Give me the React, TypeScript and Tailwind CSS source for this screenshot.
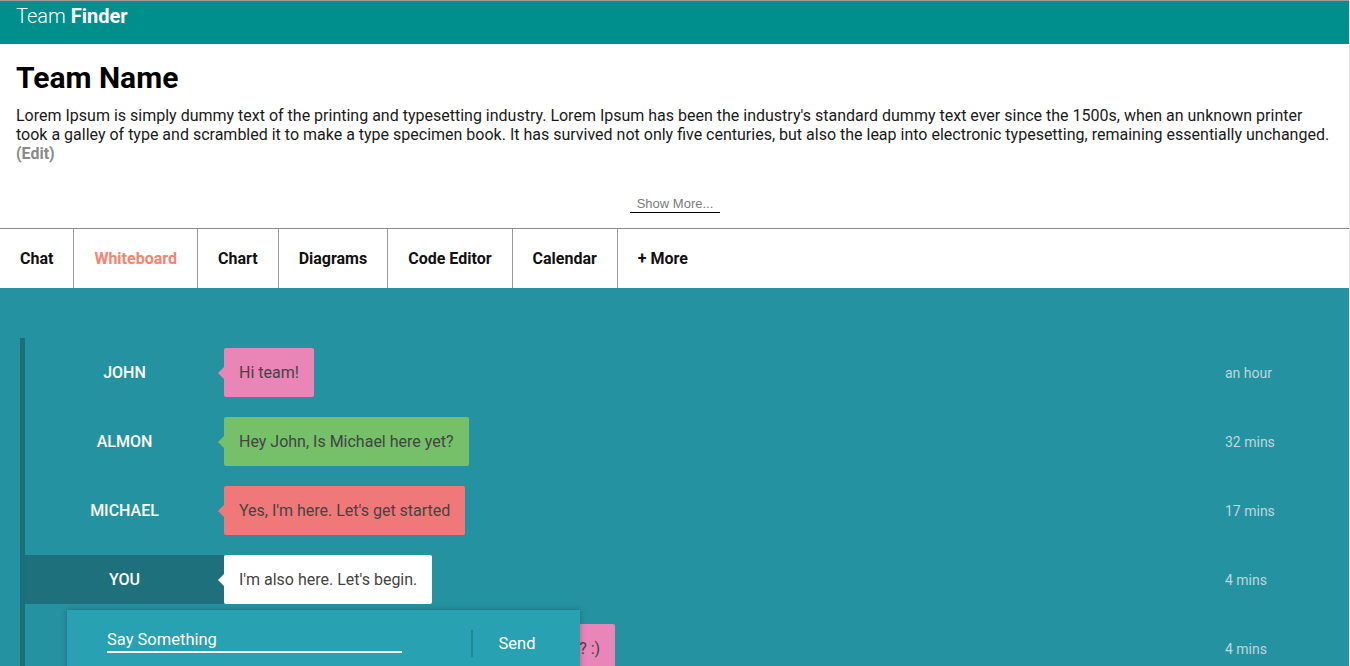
import React from "react";

const tabs = ["Chat", "Whiteboard", "Chart", "Diagrams", "Code Editor", "Calendar", "+ More"];

const messages = [
  { name: "JOHN", text: "Hi team!", color: "bg-[#e985b7]", arrow: "border-r-[#e985b7]", time: "an hour" },
  { name: "ALMON", text: "Hey John, Is Michael here yet?", color: "bg-[#75c069]", arrow: "border-r-[#75c069]", time: "32 mins" },
  { name: "MICHAEL", text: "Yes, I'm here. Let's get started", color: "bg-[#f17878]", arrow: "border-r-[#f17878]", time: "17 mins" },
  { name: "YOU", text: "I'm also here. Let's begin.", color: "bg-white", arrow: "border-r-white", time: "4 mins", me: true },
  { name: "JOHN", text: "Great, so shall we start with the whiteboard now? :)", color: "bg-[#e985b7]", arrow: "border-r-[#e985b7]", time: "4 mins" },
];

export default function App() {
  return (
    <div className="w-[1350px] h-[666px] overflow-hidden bg-white border-r border-[#e6e6e6] font-['Roboto',sans-serif]">
      <header className="h-[44px] border-t border-[#9a9a9a] bg-[#008f8c] px-4 pt-[3px]">
        <div className="text-[20px] leading-[24px] text-white">
          <span className="font-light">Team </span>
          <span className="font-bold">Finder</span>
        </div>
      </header>

      <section className="px-4 pt-[16px] h-[185px] border-b border-[#8a8a8a] flex flex-col">
        <h1 className="text-[30px] leading-[36px] font-bold text-black">Team Name</h1>
        <p className="mt-[10px] text-[16px] leading-[19px] text-[#1a1a1a]">
          Lorem Ipsum is simply dummy text of the printing and typesetting industry. Lorem Ipsum has been the industry's standard dummy text ever since the 1500s, when an unknown printer took a galley of type and scrambled it to make a type specimen book. It has survived not only five centuries, but also the leap into electronic typesetting, remaining essentially unchanged.{" "}
          <br />
          <span className="font-bold text-[#8a8a8a]">(Edit)</span>
        </p>
        <div className="mt-auto mb-[15px] flex justify-center">
          <span className="inline-block w-[90px] text-center pl-[1px] border-b border-black text-[13px] leading-[16px] text-[#7a7a7a] font-['Liberation_Sans',sans-serif]">
            Show More...
          </span>
        </div>
      </section>

      <nav className="h-[59px] flex">
        {tabs.map((t, i) => (
          <div
            key={t}
            className={`flex items-center px-5 pt-[1px] text-[16px] font-bold ${
              i < tabs.length - 1 ? "border-r border-[#9a9a9a]" : ""
            } ${t === "Whiteboard" ? "text-[#f7836f]" : "text-[#111]"}`}
          >
            {t}
          </div>
        ))}
      </nav>

      <main className="relative h-[400px] bg-[#2592a2] pt-[50px] pl-[20px]">
        <div className="border-l-[5px] border-[#1c6f7a] pt-[10px] flex flex-col gap-5">
          {messages.map((m, i) => (
            <div key={i} className="flex h-[49px]">
              <div
                className={`w-[199px] shrink-0 flex items-center justify-center pt-[1px] text-[16px] font-medium text-white ${
                  m.me ? "bg-[#1e707c]" : ""
                }`}
              >
                {m.name}
              </div>
              <div className="flex-1 flex items-center">
                <div className={`relative h-[49px] rounded-[2px] ${m.color} px-[15px] pt-[1px] flex items-center text-[16px] text-[#444] whitespace-nowrap`}>
                  <span
                    className={`absolute left-[-6px] top-1/2 -translate-y-1/2 w-0 h-0 border-y-[6px] border-y-transparent border-r-[6px] ${m.arrow}`}
                  />
                  {m.text}
                </div>
              </div>
              <div className="w-[124px] shrink-0 flex items-center pt-[2px] text-[14px] text-[#bfd6da]">{m.time}</div>
            </div>
          ))}
        </div>

        <div className="absolute left-[67px] top-[322px] w-[513px] h-[80px] bg-[#28a2b2] shadow-[0_0_6px_rgba(0,0,0,0.25)] flex items-start pt-[19px]">
          <div className="ml-[40px] w-[295px] border-b-2 border-white text-[16.5px] leading-[22px] text-white">
            Say Something
          </div>
          <div className="ml-[69px] mt-[1px] w-[2px] h-[27px] bg-[#1f8796]" />
          <div className="w-[88px] text-center text-[16.5px] leading-[22px] text-white mt-[4px]">Send</div>
        </div>
      </main>
    </div>
  );
}
